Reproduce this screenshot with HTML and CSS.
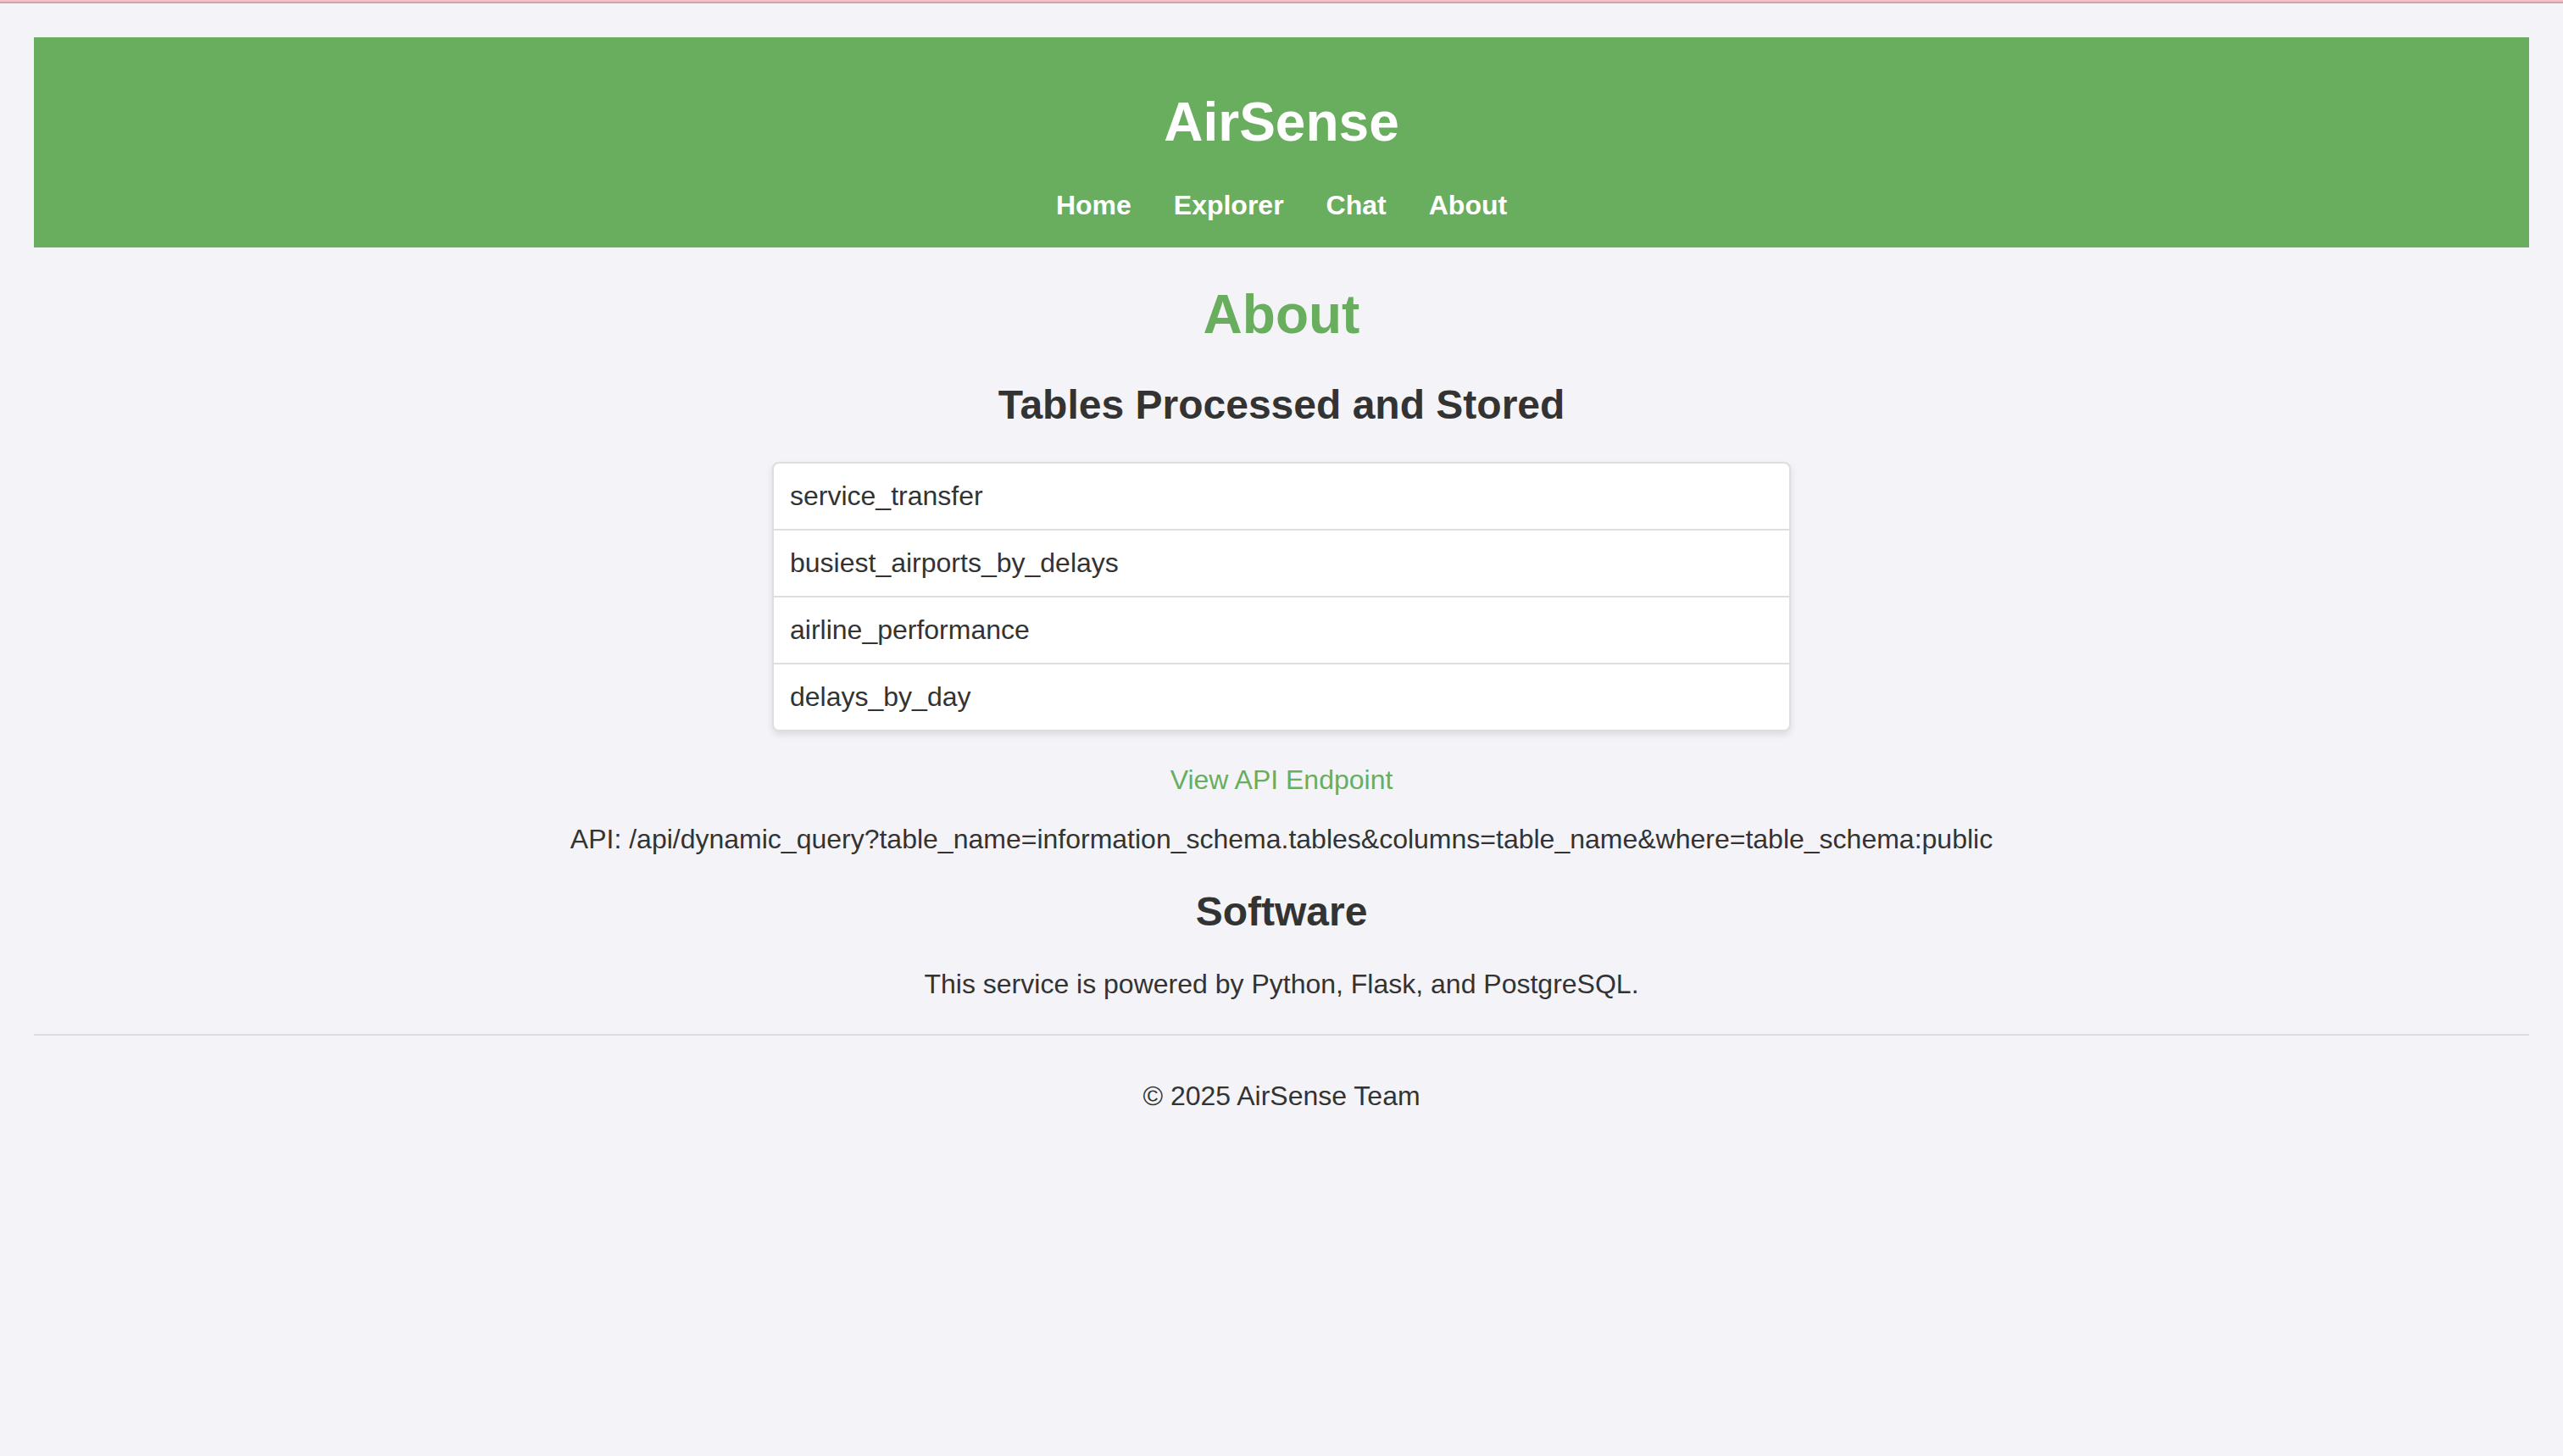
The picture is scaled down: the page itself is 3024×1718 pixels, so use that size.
FILE: index.html
```html
<!DOCTYPE html>
<html lang="en">
<head>
<meta charset="utf-8">
<title>AirSense - About</title>
<link rel="stylesheet" href="styles.css">
</head>
<body>
<div class="topline"></div>
<div class="page">
  <header class="site-header">
    <h1 class="brand">AirSense</h1>
    <nav class="nav">
      <a href="#" class="nav-link">Home</a>
      <a href="#" class="nav-link">Explorer</a>
      <a href="#" class="nav-link">Chat</a>
      <a href="#" class="nav-link">About</a>
    </nav>
  </header>
  <main class="content">
    <h1 class="page-title">About</h1>
    <h2 class="section-title">Tables Processed and Stored</h2>
    <ul class="table-list">
      <li class="table-item">service_transfer</li>
      <li class="table-item">busiest_airports_by_delays</li>
      <li class="table-item">airline_performance</li>
      <li class="table-item">delays_by_day</li>
    </ul>
    <p class="endpoint"><a href="#" class="endpoint-link">View API Endpoint</a></p>
    <p class="api-text">API: /api/dynamic_query?table_name=information_schema.tables&amp;columns=table_name&amp;where=table_schema:public</p>
    <h2 class="section-title software">Software</h2>
    <p class="software-text">This service is powered by Python, Flask, and PostgreSQL.</p>
  </main>
  <footer class="site-footer">
    <p class="copyright">© 2025 AirSense Team</p>
  </footer>
</div>
</body>
</html>
```

FILE: styles.css
```css
html, body {
  margin: 0;
  padding: 0;
  background: #f4f4f8;
}

body {
  font-family: "Liberation Sans", Arial, Helvetica, sans-serif;
  font-size: 32px;
  color: #333333;
  min-height: 1718px;
}

.topline {
  height: 2px;
  background: #f6bec5;
  border-bottom: 2px solid #cfa4aa;
}

.page {
  padding: 40px 40px 0 40px;
}

.site-header {
  background: #69ae5e;
  color: #ffffff;
  text-align: center;
  padding: 63px 0 31px 0;
}

.brand {
  margin: 0 0 43px 0;
  font-size: 64px;
  font-weight: bold;
}

.nav {
  display: flex;
  justify-content: center;
  gap: 50px;
}

.nav-link {
  color: #ffffff;
  font-weight: bold;
  text-decoration: none;
  font-size: 32px;
}

.content {
  text-align: center;
  padding-top: 42px;
}

.page-title {
  margin: 0 0 42px 0;
  font-size: 64px;
  color: #69ae5e;
  font-weight: bold;
}

.section-title {
  margin: 0 0 40px 0;
  font-size: 48px;
  font-weight: bold;
  color: #333333;
}

.table-list {
  list-style: none;
  margin: 0 auto 39px auto;
  padding: 0;
  width: 1202px;
  box-sizing: border-box;
  background: #ffffff;
  border: 2px solid #dedede;
  border-radius: 8px;
  box-shadow: 0 4px 8px rgba(0, 0, 0, 0.1);
  text-align: left;
}

.table-item {
  padding: 20px 19px;
  border-bottom: 2px solid #dedede;
}

.table-item:last-child {
  border-bottom: none;
}

.endpoint {
  margin: 0 0 33px 0;
}

.endpoint-link {
  color: #69ae5e;
  text-decoration: none;
}

.api-text {
  margin: 0 0 39px 0;
}

.software-text {
  margin: 0;
  padding-bottom: 40px;
  border-bottom: 2px solid #dddddd;
}

.site-footer {
  text-align: center;
  padding-top: 53px;
}

.copyright {
  margin: 0;
}
```
